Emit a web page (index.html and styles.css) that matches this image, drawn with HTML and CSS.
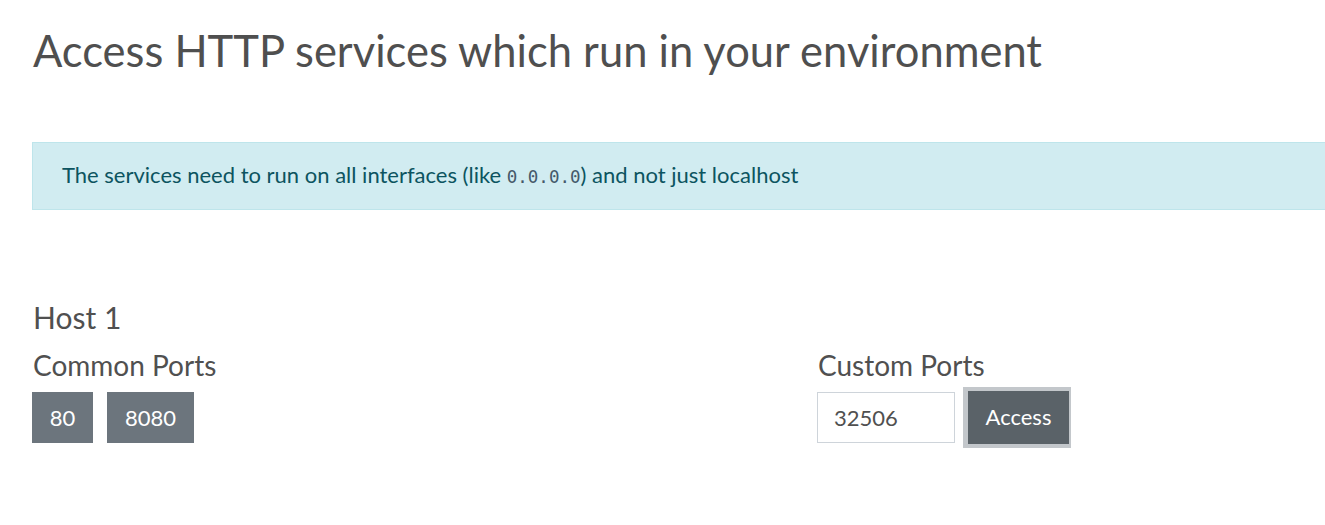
FILE: index.html
```html
<!DOCTYPE html>
<html>
<head>
<meta charset="utf-8">
<link rel="stylesheet" href="styles.css">
</head>
<body>
<div class="page">
  <h1 class="title">Access HTTP services which run in your environment</h1>
  <div class="alert"><p class="alert-text">The services need to run on all interfaces (like <code>0.0.0.0</code>) and not just localhost</p></div>
  <h4 class="host">Host 1</h4>
  <div class="row">
    <div class="col">
      <h5 class="label">Common Ports</h5>
      <div class="ports">
        <button class="btn port">80</button>
        <button class="btn port">8080</button>
      </div>
    </div>
    <div class="col">
      <h5 class="label">Custom Ports</h5>
      <div class="custom">
        <input class="port-input" type="text" value="32506">
        <button class="btn access">Access</button>
      </div>
    </div>
  </div>
</div>
</body>
</html>
```
FILE: styles.css
```css
html, body {
  margin: 0;
  padding: 0;
  background: #fff;
  overflow: hidden;
}
body {
  font-family: "Lato", "Noto Sans", sans-serif;
  color: #505050;
}
.page {
  width: 1570px;
  padding: 0 0 0 32px;
}
.title {
  font-weight: 400;
  font-size: 43.5px;
  line-height: 50px;
  margin: 25px 0 0 1px;
  color: #4f4f4f;
}
.alert {
  margin-top: 67px;
  background: #d1ecf1;
  border: 1px solid #bee5eb;
  color: #0c5460;
  height: 66px;
  display: flex;
  align-items: center;
  padding-left: 29px;
}
.alert-text {
  margin: 0;
  font-size: 22px;
  line-height: 28px;
  padding-bottom: 1px;
}
.alert code {
  font-family: "DejaVu Sans Mono", monospace;
  font-size: 17.5px;
  color: #45596a;
}
.host {
  font-weight: 400;
  font-size: 30px;
  line-height: 36px;
  margin: 89px 0 0 1px;
}
.row {
  display: flex;
  width: 1570px;
}
.col {
  width: 785px;
}
.label {
  font-weight: 400;
  font-size: 28px;
  line-height: 32px;
  margin: 14px 0 0 1px;
}
.ports, .custom {
  display: flex;
  align-items: center;
}
.ports {
  gap: 14px;
  margin-top: 11px;
}
.btn {
  font-family: inherit;
  font-size: 22px;
  color: #fff;
  border: none;
  border-radius: 0;
  height: 51px;
  padding: 0 18px;
}
.port {
  background: #6c757d;
}
.port:first-child {
  width: 61px;
  padding: 0;
}
.port:last-child {
  width: 87px;
  padding: 0;
}
.custom {
  gap: 8px;
  margin-top: 6px;
}
.port-input {
  font-family: inherit;
  font-size: 22px;
  color: #505050;
  width: 138px;
  height: 51px;
  box-sizing: border-box;
  border: 1px solid #ced4da;
  padding: 0 16px;
  outline: none;
}
.access {
  background: #5a6268;
  height: 61px;
  width: 108px;
  box-sizing: border-box;
  border-style: solid;
  border-color: #c3c7cb;
  border-width: 4px 2px 4px 5px;
  padding: 0 0 3px;
}
```
